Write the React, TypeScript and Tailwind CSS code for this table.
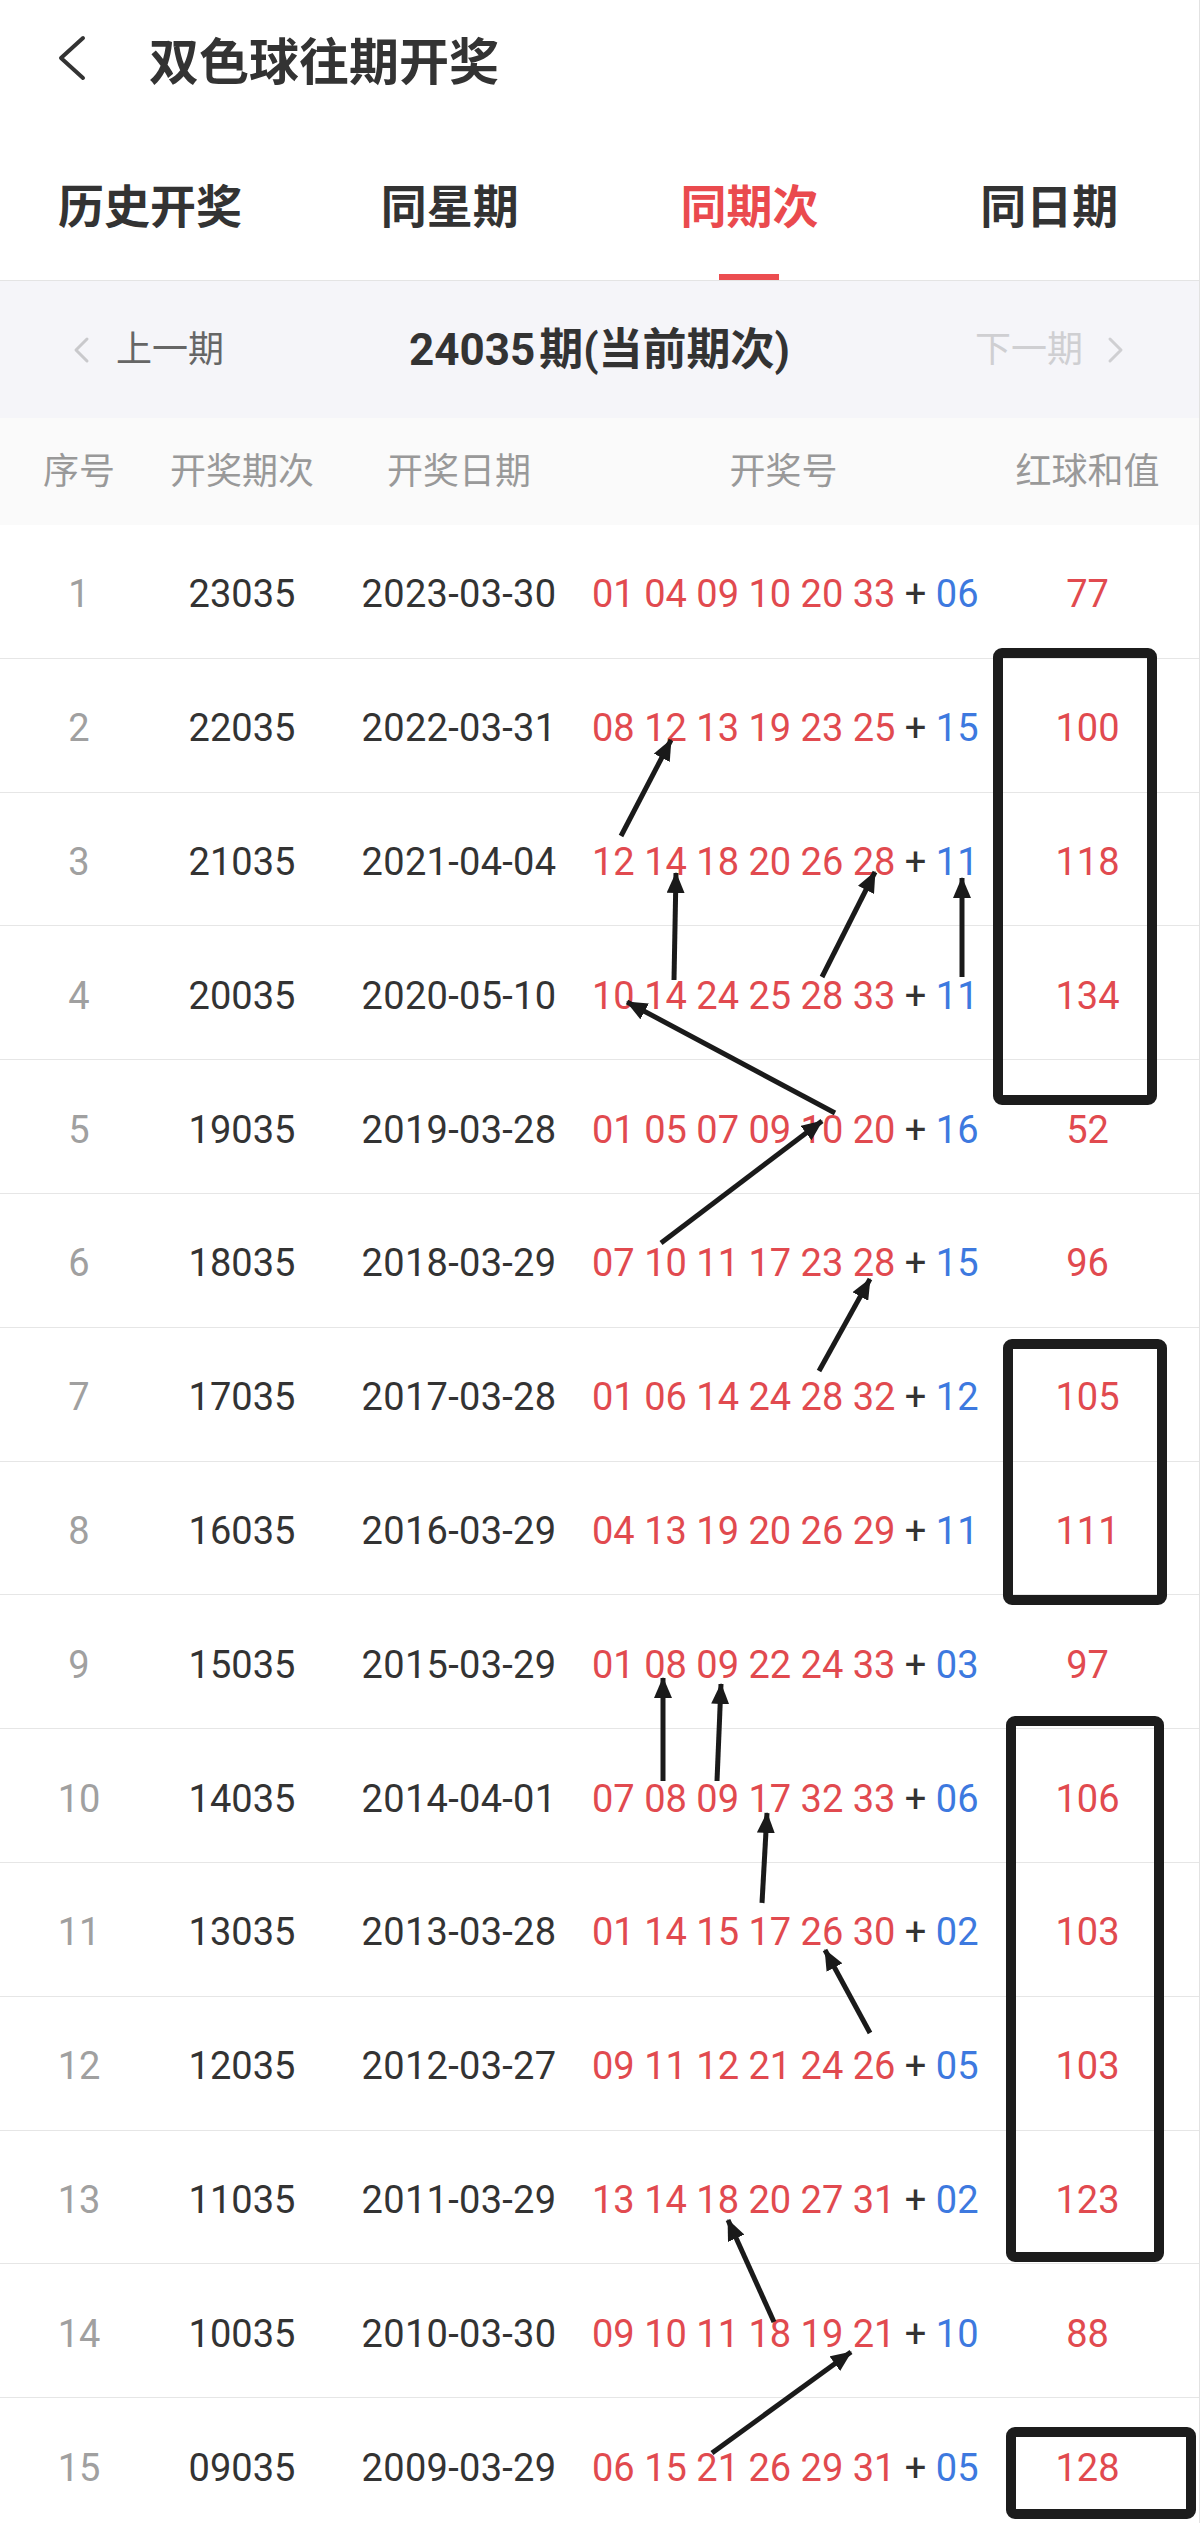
import React from 'react';

const rows = [
  { no: 1, issue: '23035', date: '2023-03-30', reds: ['01', '04', '09', '10', '20', '33'], blue: '06', sum: 77 },
  { no: 2, issue: '22035', date: '2022-03-31', reds: ['08', '12', '13', '19', '23', '25'], blue: '15', sum: 100 },
  { no: 3, issue: '21035', date: '2021-04-04', reds: ['12', '14', '18', '20', '26', '28'], blue: '11', sum: 118 },
  { no: 4, issue: '20035', date: '2020-05-10', reds: ['10', '14', '24', '25', '28', '33'], blue: '11', sum: 134 },
  { no: 5, issue: '19035', date: '2019-03-28', reds: ['01', '05', '07', '09', '10', '20'], blue: '16', sum: 52 },
  { no: 6, issue: '18035', date: '2018-03-29', reds: ['07', '10', '11', '17', '23', '28'], blue: '15', sum: 96 },
  { no: 7, issue: '17035', date: '2017-03-28', reds: ['01', '06', '14', '24', '28', '32'], blue: '12', sum: 105 },
  { no: 8, issue: '16035', date: '2016-03-29', reds: ['04', '13', '19', '20', '26', '29'], blue: '11', sum: 111 },
  { no: 9, issue: '15035', date: '2015-03-29', reds: ['01', '08', '09', '22', '24', '33'], blue: '03', sum: 97 },
  { no: 10, issue: '14035', date: '2014-04-01', reds: ['07', '08', '09', '17', '32', '33'], blue: '06', sum: 106 },
  { no: 11, issue: '13035', date: '2013-03-28', reds: ['01', '14', '15', '17', '26', '30'], blue: '02', sum: 103 },
  { no: 12, issue: '12035', date: '2012-03-27', reds: ['09', '11', '12', '21', '24', '26'], blue: '05', sum: 103 },
  { no: 13, issue: '11035', date: '2011-03-29', reds: ['13', '14', '18', '20', '27', '31'], blue: '02', sum: 123 },
  { no: 14, issue: '10035', date: '2010-03-30', reds: ['09', '10', '11', '18', '19', '21'], blue: '10', sum: 88 },
  { no: 15, issue: '09035', date: '2009-03-29', reds: ['06', '15', '21', '26', '29', '31'], blue: '05', sum: 128 },
];

const tabs = ['历史开奖', '同星期', '同期次', '同日期'];

// hand-drawn annotations on top of the table
const boxes = [
  { x: 998, y: 653, w: 154, h: 447 },
  { x: 1008, y: 1344, w: 154, h: 256 },
  { x: 1011, y: 1721, w: 148, h: 536 },
  { x: 1011, y: 2432, w: 180, h: 82 },
];

const arrows = [
  [621, 836, 671, 740],
  [674, 980, 676, 873],
  [822, 977, 875, 872],
  [962, 977, 962, 878],
  [835, 1113, 627, 1002],
  [661, 1243, 822, 1121],
  [819, 1371, 870, 1279],
  [663, 1781, 663, 1678],
  [717, 1781, 721, 1684],
  [762, 1903, 767, 1813],
  [870, 2033, 825, 1950],
  [774, 2322, 728, 2220],
  [712, 2453, 851, 2352],
];

const cols = 'grid grid-cols-[158px_168px_266px_383px_225px] items-center text-center';

function Annotations() {
  return (
    <svg className="absolute left-0 top-0 pointer-events-none" width="1200" height="2523" viewBox="0 0 1200 2523">
      <defs>
        <marker id="head" markerUnits="userSpaceOnUse" markerWidth="22" markerHeight="18" refX="20" refY="9" orient="auto">
          <path d="M0 0 L21 9 L0 18 Z" fill="#1a1a1a" />
        </marker>
      </defs>
      {boxes.map((b, i) => (
        <rect key={i} x={b.x} y={b.y} width={b.w} height={b.h} rx="4" fill="none" stroke="#1c1c1c" strokeWidth="10" strokeLinejoin="round" />
      ))}
      {arrows.map(([x1, y1, x2, y2], i) => (
        <line key={i} x1={x1} y1={y1} x2={x2} y2={y2} stroke="#1a1a1a" strokeWidth="5" markerEnd="url(#head)" />
      ))}
    </svg>
  );
}

export default function App() {
  return (
    <div className="relative w-[1200px] h-[2523px] overflow-hidden bg-white border-r border-[#e2e2e2] font-['Roboto','Noto_Sans_CJK_SC',sans-serif] text-[#333]">
      {/* Top bar */}
      <div className="h-[116px] flex items-center">
        <svg className="ml-[57px]" width="30" height="46" viewBox="0 0 30 46">
          <path d="M26 3 L4 23 L26 43" fill="none" stroke="#333" strokeWidth="4" strokeLinecap="round" strokeLinejoin="round" />
        </svg>
        <h1 className="ml-[62px] text-[50px] leading-none font-bold text-[#333] font-['Noto_Sans_CJK_SC',sans-serif]">双色球往期开奖</h1>
      </div>

      {/* Tabs */}
      <div className="h-[165px] grid grid-cols-4 border-b border-[#e4e4e4]">
        {tabs.map((t, i) => (
          <div key={t} className="flex flex-col items-center justify-end">
            <span className={`text-[46px] leading-[46px] font-bold font-['Noto_Sans_CJK_SC',sans-serif] ${i === 2 ? 'text-[#ea4a4e]' : 'text-[#333]'}`}>{t}</span>
            <span className={`mt-[48px] w-[60px] h-[6px] ${i === 2 ? 'bg-[#ec4d50]' : 'bg-transparent'}`} />
          </div>
        ))}
      </div>

      {/* Issue switcher */}
      <div className="h-[137px] bg-[#f5f5f9] flex items-center justify-between pl-[72px] pr-[74px]">
        <div className="flex items-center gap-[26px] text-[#666]">
          <svg width="18" height="28" viewBox="0 0 18 28">
            <path d="M15 3 L4 14 L15 25" fill="none" stroke="#c9c9cc" strokeWidth="3" strokeLinecap="round" strokeLinejoin="round" />
          </svg>
          <span className="text-[36px] leading-none">上一期</span>
        </div>
        <div className="text-[44px] leading-none font-bold text-[#333]">
          24035<span className="ml-[4px]">期</span>(当前期次)
        </div>
        <div className="flex items-center gap-[24px] text-[#cfcfd2]">
          <span className="text-[36px] leading-none">下一期</span>
          <svg width="18" height="28" viewBox="0 0 18 28">
            <path d="M3 3 L14 14 L3 25" fill="none" stroke="#cfcfd2" strokeWidth="3" strokeLinecap="round" strokeLinejoin="round" />
          </svg>
        </div>
      </div>

      {/* Table header */}
      <div className={`${cols} h-[107px] bg-[#fafafa] text-[36px] text-[#999]`}>
        <span>序号</span>
        <span>开奖期次</span>
        <span>开奖日期</span>
        <span>开奖号</span>
        <span>红球和值</span>
      </div>

      {/* Rows */}
      {rows.map((r) => (
        <div key={r.no} className={`${cols} h-[133.8px] pt-[6px] border-b border-[#e6e6e6] text-[38px] leading-none`}>
          <span className="text-[#a0a0a0]">{r.no}</span>
          <span>{r.issue}</span>
          <span className="tracking-[0.3px]">{r.date}</span>
          <span className="whitespace-pre">
            <span className="text-[#e14a4f]">{r.reds.join(' ')}</span>
            <span className="text-[#333]"> + </span>
            <span className="text-[#3d79df]">{r.blue}</span>
          </span>
          <span className="text-[#e14a4f]">{r.sum}</span>
        </div>
      ))}

      <Annotations />
    </div>
  );
}
